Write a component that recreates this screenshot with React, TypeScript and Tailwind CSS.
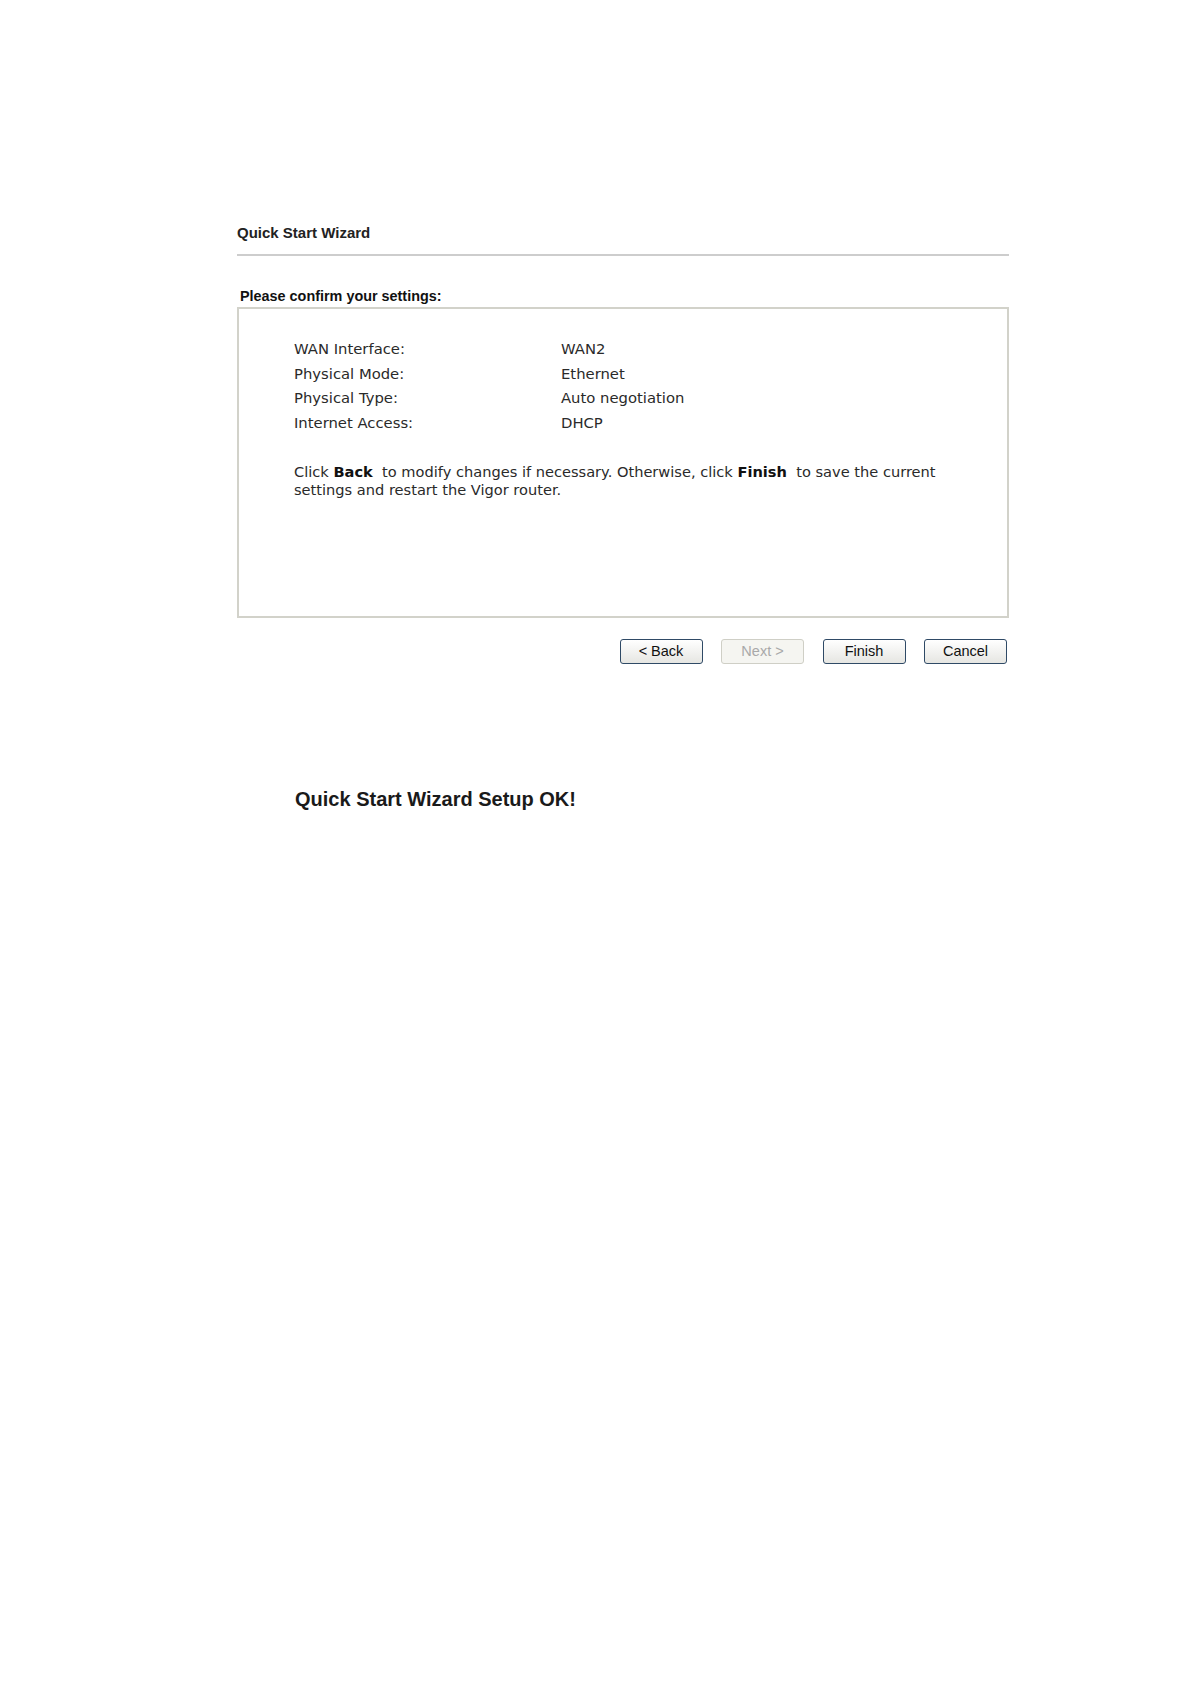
import React from 'react'

const rows: Array<[string, string]> = [
  ['WAN Interface:', 'WAN2'],
  ['Physical Mode:', 'Ethernet'],
  ['Physical Type:', 'Auto negotiation'],
  ['Internet Access:', 'DHCP'],
]

const WizardButton = ({ label, disabled }: { label: string; disabled?: boolean }) => (
  <button
    type="button"
    disabled={disabled}
    className={
      disabled
        ? 'w-[83px] h-[25px] rounded-[3px] border border-[#cfcfc6] bg-[#f5f5f1] text-[#a9a9a9] text-[14.5px] leading-none'
        : 'w-[83px] h-[25px] rounded-[3px] border border-[#2f4a66] bg-gradient-to-b from-white to-[#e6e6e2] text-[#111] text-[14.5px] leading-none'
    }
  >
    {label}
  </button>
)

export default function App() {
  return (
    <div className="w-[1190px] h-[1684px] bg-white font-['Liberation_Sans',Arial,sans-serif]">
      <div className="ml-[237px] w-[772px] pt-[224px]">
        <div className="text-[15px] leading-[18px] font-bold text-[#222]">Quick Start Wizard</div>
        <div className="mt-[12px] h-[2px] bg-[#cdcdcd]" />

        <div className="mt-[32px] pl-[3px] text-[14.4px] leading-[17px] font-bold text-[#111]">
          Please confirm your settings:
        </div>

        <div className="mt-[2px] h-[311px] border-2 border-[#d2d2ca] pl-[55px] pt-[28px] font-['DejaVu_Sans',Verdana,sans-serif] text-[14.8px] text-[#2a2a2a]">
          {rows.map(([label, value]) => (
            <div key={label} className="flex h-[24.7px] leading-[24.7px]">
              <span className="w-[267px]">{label}</span>
              <span>{value}</span>
            </div>
          ))}
          <p className="mt-[27px] leading-[18px] text-[14.6px]">
            Click <b className="font-bold text-[#111]">Back</b>&nbsp; to modify changes if necessary. Otherwise, click{' '}
            <b className="font-bold text-[#111]">Finish</b>&nbsp; to save the current
            <br />
            settings and restart the Vigor router.
          </p>
        </div>

        <div className="mt-[21px] flex justify-end gap-[18.5px] pr-[2px]">
          <WizardButton label="< Back" />
          <WizardButton label="Next >" disabled />
          <WizardButton label="Finish" />
          <WizardButton label="Cancel" />
        </div>

        <div className="mt-[123px] pl-[58px] text-[20px] leading-[24px] font-bold text-[#1a1a1a]">
          Quick Start Wizard Setup OK!
        </div>
      </div>
    </div>
  )
}
